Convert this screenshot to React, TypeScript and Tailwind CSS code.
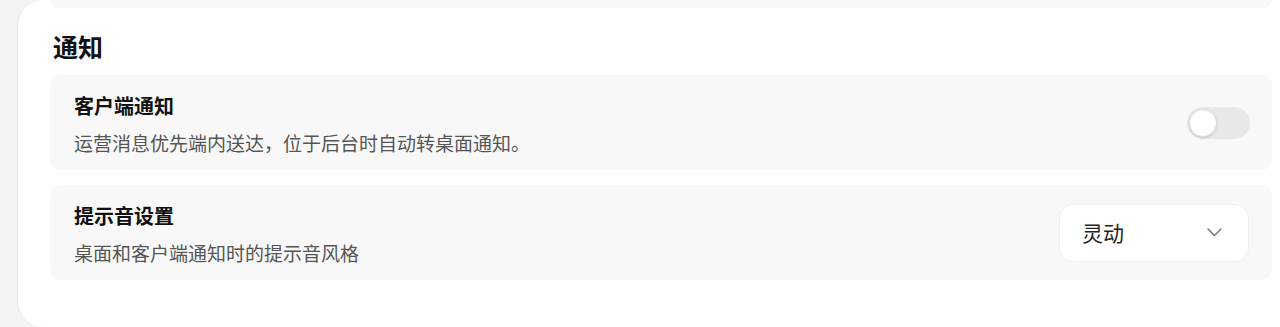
import { useState } from "react";

const font = { fontFamily: '"Noto Sans CJK SC", "Noto Sans", sans-serif' };

function Toggle({ on, onChange }: { on: boolean; onChange: () => void }) {
  return (
    <button
      onClick={onChange}
      className={`relative h-[32px] w-[63px] shrink-0 rounded-full transition-colors ${on ? "bg-[#3b82f6]" : "bg-[#e8e8e8]"}`}
    >
      <span
        className={`absolute top-[2px] size-[28px] rounded-full border border-[#dedede] bg-white shadow-sm transition-all ${on ? "left-[33px]" : "left-[2px]"}`}
      />
    </button>
  );
}

function SettingRow({ title, desc, children }: { title: string; desc: string; children: React.ReactNode }) {
  return (
    <div className="flex h-[95px] items-center justify-between rounded-[10px] bg-[#f8f8f8] pl-[24px] pr-[22px]">
      <div className="flex flex-col self-start pt-[17px]">
        <div className="text-[20px] font-bold leading-[28px] text-[#111]">{title}</div>
        <div className="mt-[10px] text-[19px] leading-[26px] text-[#555]">{desc}</div>
      </div>
      {children}
    </div>
  );
}

export default function App() {
  const [notify, setNotify] = useState(false);

  return (
    <div className="flex h-[327px] w-full bg-[#f3f3f3]" style={font}>
      <div className="w-[17px] shrink-0" />
      <div className="flex flex-1 flex-col rounded-l-[26px] border-l border-[#e6e6e6] bg-white pl-[32px] pr-[8px]">
        {/* end of the card above */}
        <div className="h-[8px] rounded-b-[10px] bg-[#f8f8f8]" />

        <h2 className="mt-[21px] mb-[12px] pl-[3px] text-[25px] font-bold leading-[34px] text-[#111]">通知</h2>

        <div className="flex flex-col gap-[15px]">
          <SettingRow title="客户端通知" desc="运营消息优先端内送达，位于后台时自动转桌面通知。">
            <Toggle on={notify} onChange={() => setNotify(!notify)} />
          </SettingRow>

          <SettingRow title="提示音设置" desc="桌面和客户端通知时的提示音风格">
            <button className="mr-[1px] flex h-[58px] w-[190px] items-center justify-between rounded-[14px] border border-[#efefef] bg-white pl-[22px] pr-[26px]">
              <span className="text-[21px] leading-none text-[#222]">灵动</span>
              <svg width="15" height="9" viewBox="0 0 15 9" fill="none">
                <polyline points="1,1 7.5,7.5 14,1" stroke="#777" strokeWidth="1.5" strokeLinecap="round" strokeLinejoin="round" />
              </svg>
            </button>
          </SettingRow>
        </div>
      </div>
    </div>
  );
}
